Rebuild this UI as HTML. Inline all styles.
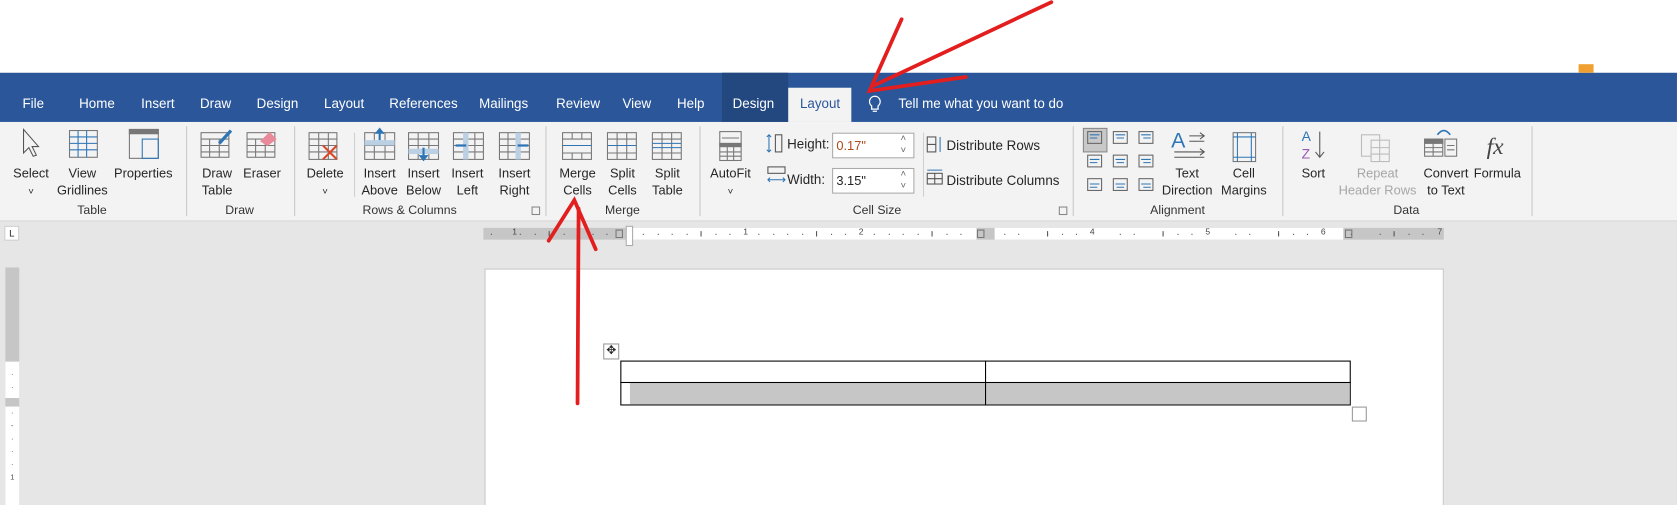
<!DOCTYPE html>
<html><head><meta charset="utf-8"><style>
*{margin:0;padding:0;box-sizing:border-box}
html,body{width:1677px;height:505px;overflow:hidden;background:#fff}
#w{position:absolute;left:0;top:0;width:1568px;height:472px;transform:scale(1.0695,1.0699);transform-origin:0 0;font-family:"Liberation Sans",sans-serif;color:#262626}
.a{position:absolute}
.tab{position:absolute;top:90px;color:#fff;font-size:12.5px}
.lbl{position:absolute;font-size:12px;text-align:center;line-height:16px;white-space:nowrap;transform:translateX(-50%)}
.g{position:absolute;top:191px;font-size:11.5px;transform:translateX(-50%);color:#333}
.sep{position:absolute;top:118px;width:1px;height:84px;background:#c8c8c8}
</style></head><body><div id="w">
<div class="a" style="left:0;top:68px;width:1568px;height:46px;background:#2b579a"></div>
<div class="a" style="left:675px;top:68px;width:62px;height:46px;background:#23487f"></div>
<div class="a" style="left:737px;top:82px;width:59px;height:32px;background:#f3f3f3"></div>
<div class="a" style="left:1476px;top:60px;width:14px;height:8px;background:#f0a030"></div>
<div class="tab" style="left:21px">File</div>
<div class="tab" style="left:74px">Home</div>
<div class="tab" style="left:132px">Insert</div>
<div class="tab" style="left:187px">Draw</div>
<div class="tab" style="left:240px">Design</div>
<div class="tab" style="left:303px">Layout</div>
<div class="tab" style="left:364px">References</div>
<div class="tab" style="left:448px">Mailings</div>
<div class="tab" style="left:520px">Review</div>
<div class="tab" style="left:582px">View</div>
<div class="tab" style="left:633px">Help</div>
<div class="tab" style="left:685px">Design</div>
<div class="tab" style="left:748px;color:#2b579a">Layout</div>
<svg class="a" style="left:810px;top:88px" width="16" height="20"><path d="M8 2a5 5 0 0 0-3 9v3h6v-3a5 5 0 0 0-3-9zM6 16h4" fill="none" stroke="#fff" stroke-width="1.2"/></svg>
<div class="tab" style="left:840px">Tell me what you want to do</div>

<div class="a" style="left:0;top:114px;width:1568px;height:93px;background:#f3f3f3;border-bottom:1px solid #d6d6d6"></div>
<div class="sep" style="left:174px"></div><div class="sep" style="left:275px"></div><div class="sep" style="left:510px"></div><div class="sep" style="left:654px"></div><div class="sep" style="left:1003px"></div><div class="sep" style="left:1199px"></div><div class="sep" style="left:1432px"></div>
<div class="a" style="left:331px;top:124px;width:1px;height:60px;background:#d0d0d0"></div>

<svg class="a" style="left:0;top:114px" width="1568" height="70" fill="none" stroke="#777" stroke-width="1">
<path d="M22 7v22l5-5 4 8 3-1-4-8h6z" stroke="#555"/>
<g><rect x="65" y="8" width="26" height="25"/><path d="M65 14h26M65 20h26M65 26h26M73 8v25M81 8v25" stroke="#2e75b6"/></g>
<g><rect x="121" y="7" width="27" height="27"/><rect x="121" y="7" width="27" height="4" fill="#777"/><rect x="133" y="16" width="15" height="18" stroke="#2e75b6"/></g>
<g><rect x="188" y="10" width="26" height="23"/><path d="M188 16h26M188 22h26M188 28h26M196 16v17M205 16v17"/><path d="M205 20l11-12" stroke="#2e75b6" stroke-width="3"/></g>
<g><rect x="231" y="10" width="26" height="23"/><path d="M231 16h26M231 22h26M231 28h26M239 16v17M248 16v17"/><path d="M244 18l8-8 6 6-8 6z" fill="#e88a9a" stroke="#e88a9a"/></g>
<g><rect x="289" y="10" width="26" height="25"/><path d="M289 16h26M289 22h26M289 28h26M298 10v25M307 10v25"/><path d="M302 22l13 13M315 22l-13 13" stroke="#d9482b" stroke-width="2"/></g>
<g><rect x="341" y="10" width="28" height="25"/><path d="M341 22h28M341 28h28M350 10v25M360 10v25"/><rect x="341" y="17" width="28" height="5" fill="#bcd0e4" stroke="none"/><path d="M355 7v10" stroke="#2e75b6" stroke-width="2"/><path d="M351 11l4-5 4 5" fill="#2e75b6" stroke="#2e75b6"/></g>
<g><rect x="382" y="10" width="28" height="25"/><path d="M382 16h28M382 22h28M391 10v25M401 10v25"/><rect x="382" y="25" width="28" height="5" fill="#bcd0e4" stroke="none"/><path d="M396 24v10" stroke="#2e75b6" stroke-width="2"/><path d="M392 31l4 5 4-5" fill="#2e75b6" stroke="#2e75b6"/></g>
<g><rect x="424" y="10" width="28" height="25"/><path d="M424 16h28M424 22h28M424 28h28M444 10v25"/><rect x="433" y="10" width="5" height="25" fill="#bcd0e4" stroke="none"/><path d="M426 22h10" stroke="#2e75b6" stroke-width="2"/></g>
<g><rect x="467" y="10" width="28" height="25"/><path d="M467 16h28M467 22h28M467 28h28M475 10v25"/><rect x="482" y="10" width="5" height="25" fill="#bcd0e4" stroke="none"/><path d="M484 22h10" stroke="#2e75b6" stroke-width="2"/></g>
<g><rect x="526" y="10" width="27" height="25"/><path d="M526 16h27M526 29h27M535 10v6M544 10v6M535 29v6M544 29v6"/><path d="M526 22h27" stroke="#2e75b6"/></g>
<g><rect x="568" y="10" width="27" height="25"/><path d="M568 16h27M568 29h27M577 10v25M586 10v25"/><path d="M568 22h27" stroke="#2e75b6"/></g>
<g><rect x="610" y="10" width="27" height="25"/><path d="M610 16h27M610 29h27M619 10v25M628 10v25"/><path d="M610 20h27M610 24h27" stroke="#2e75b6"/></g>
<g><rect x="673" y="9" width="20" height="27"/><path d="M675 15h16M673 23h20M673 28h20M673 32h20M680 20v16M686 20v16"/><rect x="673" y="20" width="20" height="3" fill="#777"/></g>
<g><rect x="1013" y="6" width="22" height="22" fill="#c8c8c8" stroke="#888"/></g>
<g stroke="#666"><rect x="1017" y="9" width="13" height="11"/><rect x="1041" y="9" width="13" height="11"/><rect x="1065" y="9" width="13" height="11"/><rect x="1017" y="31" width="13" height="11"/><rect x="1041" y="31" width="13" height="11"/><rect x="1065" y="31" width="13" height="11"/><rect x="1017" y="53" width="13" height="11"/><rect x="1041" y="53" width="13" height="11"/><rect x="1065" y="53" width="13" height="11"/></g>
<path d="M1019 12h9M1019 15h7M1043 12h9M1044 15h7M1067 12h9M1069 15h7M1019 35h9M1019 38h7M1043 35h9M1044 38h7M1067 35h9M1069 38h7M1019 58h9M1019 61h7M1043 58h9M1044 61h7M1067 58h9M1069 61h7" stroke="#2e75b6"/>
<text x="1095" y="24" fill="#2e75b6" stroke="none" font-size="20" font-family="Liberation Sans">A</text>
<path d="M1112 13h14M1112 18h14M1098 28h28M1098 33h28M1122 10l4 3-4 3M1122 25l4 3-4 3" stroke="#555"/>
<g><rect x="1153" y="10" width="21" height="27"/><path d="M1157 10v27M1170 10v27M1153 14h21M1153 33h21" stroke="#2e75b6"/></g>
<text x="1217" y="18" fill="#2e75b6" stroke="none" font-size="13">A</text><text x="1217" y="34" fill="#9b59b6" stroke="none" font-size="13">Z</text>
<path d="M1234 9v24M1230 28l4 5 4-5" stroke="#555"/>
<g stroke="#bbb"><rect x="1273" y="12" width="17" height="20"/><rect x="1282" y="17" width="17" height="20" fill="#f3f3f3"/><path d="M1282 24h17M1282 30h17M1290 17v20"/></g>
<g><rect x="1332" y="16" width="17" height="16"/><rect x="1332" y="16" width="17" height="4" fill="#777"/><path d="M1332 24h17M1332 28h17M1340 20v12"/><rect x="1351" y="16" width="11" height="16"/><path d="M1353 22h7M1353 26h7"/><path d="M1344 12q6-8 12 0" stroke="#2e75b6" stroke-width="1.5"/></g>
<text x="1390" y="30" fill="#444" stroke="none" font-size="22" font-style="italic" font-family="Liberation Serif">fx</text>
</svg>

<div class="lbl" style="left:29px;top:154px">Select<br><span style="font-size:9px">˅</span></div>
<div class="lbl" style="left:77px;top:154px">View<br>Gridlines</div>
<div class="lbl" style="left:134px;top:154px">Properties</div>
<div class="lbl" style="left:203px;top:154px">Draw<br>Table</div>
<div class="lbl" style="left:245px;top:154px">Eraser</div>
<div class="lbl" style="left:304px;top:154px">Delete<br><span style="font-size:9px">˅</span></div>
<div class="lbl" style="left:355px;top:154px">Insert<br>Above</div>
<div class="lbl" style="left:396px;top:154px">Insert<br>Below</div>
<div class="lbl" style="left:437px;top:154px">Insert<br>Left</div>
<div class="lbl" style="left:481px;top:154px">Insert<br>Right</div>
<div class="lbl" style="left:540px;top:154px">Merge<br>Cells</div>
<div class="lbl" style="left:582px;top:154px">Split<br>Cells</div>
<div class="lbl" style="left:624px;top:154px">Split<br>Table</div>
<div class="lbl" style="left:683px;top:154px">AutoFit<br><span style="font-size:9px">˅</span></div>
<svg class="a" style="left:716px;top:124px" width="20" height="60" fill="none" stroke="#555"><path d="M3 2v16M1 4l2-2 2 2M1 16l2 2 2-2" stroke="#2e75b6"/><rect x="9" y="2" width="6" height="16"/><rect x="2" y="32" width="16" height="6"/><path d="M2 44h16M4 42l-2 2 2 2M16 42l2 2-2 2" stroke="#2e75b6"/></svg>
<div class="a" style="left:736px;top:128px;font-size:12.5px">Height:</div>
<div class="a" style="left:736px;top:161px;font-size:12.5px">Width:</div>
<div class="a" style="left:778px;top:124px;width:77px;height:24px;background:#fff;border:1px solid #aaa;font-size:12px;padding:4px 3px;color:#b04a1a">0.17"</div>
<div class="a" style="left:778px;top:157px;width:77px;height:24px;background:#fff;border:1px solid #aaa;font-size:12px;padding:4px 3px">3.15"</div>
<div class="a" style="left:842px;top:124px;font-size:9px;line-height:11px;color:#666">˄<br>˅</div>
<div class="a" style="left:842px;top:157px;font-size:9px;line-height:11px;color:#666">˄<br>˅</div>
<div class="a" style="left:863px;top:124px;width:1px;height:60px;background:#d0d0d0"></div>
<svg class="a" style="left:866px;top:127px" width="18" height="50" fill="none" stroke="#555"><rect x="1" y="1" width="8" height="14"/><path d="M1 8h8"/><path d="M13 1v14" stroke="#2e75b6"/><rect x="1" y="35" width="14" height="10"/><path d="M8 35v10M1 40h14"/><path d="M1 32h14" stroke="#2e75b6"/></svg>
<div class="a" style="left:885px;top:129px;font-size:12.5px">Distribute Rows</div>
<div class="a" style="left:885px;top:162px;font-size:12.5px">Distribute Columns</div>
<div class="lbl" style="left:1110px;top:154px">Text<br>Direction</div>
<div class="lbl" style="left:1163px;top:154px">Cell<br>Margins</div>
<div class="lbl" style="left:1228px;top:154px">Sort</div>
<div class="lbl" style="left:1288px;top:154px;color:#a6a6a6">Repeat<br>Header Rows</div>
<div class="lbl" style="left:1352px;top:154px">Convert<br>to Text</div>
<div class="lbl" style="left:1400px;top:154px">Formula</div>
<div class="g" style="left:86px">Table</div><div class="g" style="left:224px">Draw</div><div class="g" style="left:383px">Rows &amp; Columns</div><div class="g" style="left:582px">Merge</div><div class="g" style="left:820px">Cell Size</div><div class="g" style="left:1101px">Alignment</div><div class="g" style="left:1315px">Data</div>
<div class="a" style="left:497px;top:193px;width:8px;height:8px;border:1px solid #888"></div>
<div class="a" style="left:990px;top:193px;width:8px;height:8px;border:1px solid #888"></div>

<div class="a" style="left:0;top:207px;width:1568px;height:265px;background:#e6e6e6"></div>
<div class="a" style="left:4px;top:211px;width:14px;height:14px;background:#fff;border:1px solid #ccc;font-size:9px;text-align:center;line-height:12px">L</div>
<div class="a" style="left:452px;top:213px;width:898px;height:11px;background:#c6c6c6"></div>
<div class="a" style="left:588px;top:213px;width:325px;height:11px;background:#fff"></div>
<div class="a" style="left:930px;top:213px;width:326px;height:11px;background:#fff"></div>
<svg class="a" style="left:452px;top:213px" width="898" height="11" stroke="#555" stroke-width="1">
<path d="M7 6h1M34 6h1M48 6h1M61 6h1M75 6h1M88 6h1M102 6h1M115 6h1M149 6h1M163 6h1M176 6h1M190 6h1M217 6h1M230 6h1M257 6h1M271 6h1M284 6h1M298 6h1M325 6h1M338 6h1M365 6h1M379 6h1M392 6h1M406 6h1M433 6h1M446 6h1M487 6h1M500 6h1M527 6h1M541 6h1M554 6h1M595 6h1M608 6h1M635 6h1M649 6h1M662 6h1M703 6h1M716 6h1M743 6h1M757 6h1M770 6h1M811 6h1M838 6h1M851 6h1M865 6h1M878 6h1"/>
<path d="M61.5 3v5M203.5 3v5M311.5 3v5M419.5 3v5M527.5 3v5M635.5 3v5M743.5 3v5M851.5 3v5"/>
<path d="M124 2h6v7h-6zM462 2h6v7h-6zM806 2h6v7h-6z" stroke="#777" fill="none"/>
</svg>
<div class="a" style="left:452px;top:212px;width:898px;font-size:8px;color:#444;white-space:nowrap">
<span class="a" style="left:27px">1</span><span class="a" style="left:243px">1</span><span class="a" style="left:351px">2</span><span class="a" style="left:567px">4</span><span class="a" style="left:675px">5</span><span class="a" style="left:783px">6</span><span class="a" style="left:892px">7</span></div>
<div class="a" style="left:585px;top:211px;width:7px;height:19px;border:1px solid #aaa;background:#fff"></div>
<div class="a" style="left:5px;top:250px;width:13px;height:222px;background:#c6c6c6"></div>
<div class="a" style="left:5px;top:338px;width:13px;height:134px;background:#fff"></div>
<div class="a" style="left:5px;top:372px;width:13px;height:8px;background:#c6c6c6"></div>
<div class="a" style="left:5px;top:345px;width:13px;font-size:7px;color:#444;text-align:center;line-height:12px">·<br>·<br><br>·<br>-<br>·<br>·<br>·<br>1</div>
<div class="a" style="left:453px;top:251px;width:897px;height:221px;background:#fff;border:1px solid #c8c8c8;border-bottom:none"></div>
<div class="a" style="left:564px;top:321px;width:15px;height:15px;border:1px solid #999;background:#fff;font-size:11px;text-align:center;line-height:13px">✥</div>
<div class="a" style="left:580px;top:337px;width:683px;height:42px;border:1px solid #000"></div>
<div class="a" style="left:589px;top:358px;width:673px;height:20px;background:#c6c6c6"></div>
<div class="a" style="left:580px;top:357px;width:683px;height:1px;background:#000"></div>
<div class="a" style="left:921px;top:337px;width:1px;height:42px;background:#000"></div>
<div class="a" style="left:1264px;top:380px;width:14px;height:14px;border:1px solid #999;background:#fff"></div>

<svg class="a" style="left:0;top:0" width="1568" height="472" fill="none" stroke="#e31e1e" stroke-width="3.5" stroke-linecap="round">
<path d="M540 377 L541 195"/><path d="M513 225 L537 187 L557 233"/>
<path d="M983 2 L817 80"/><path d="M843 18 L813 85 L903 72"/>
</svg>
</div></body></html>
